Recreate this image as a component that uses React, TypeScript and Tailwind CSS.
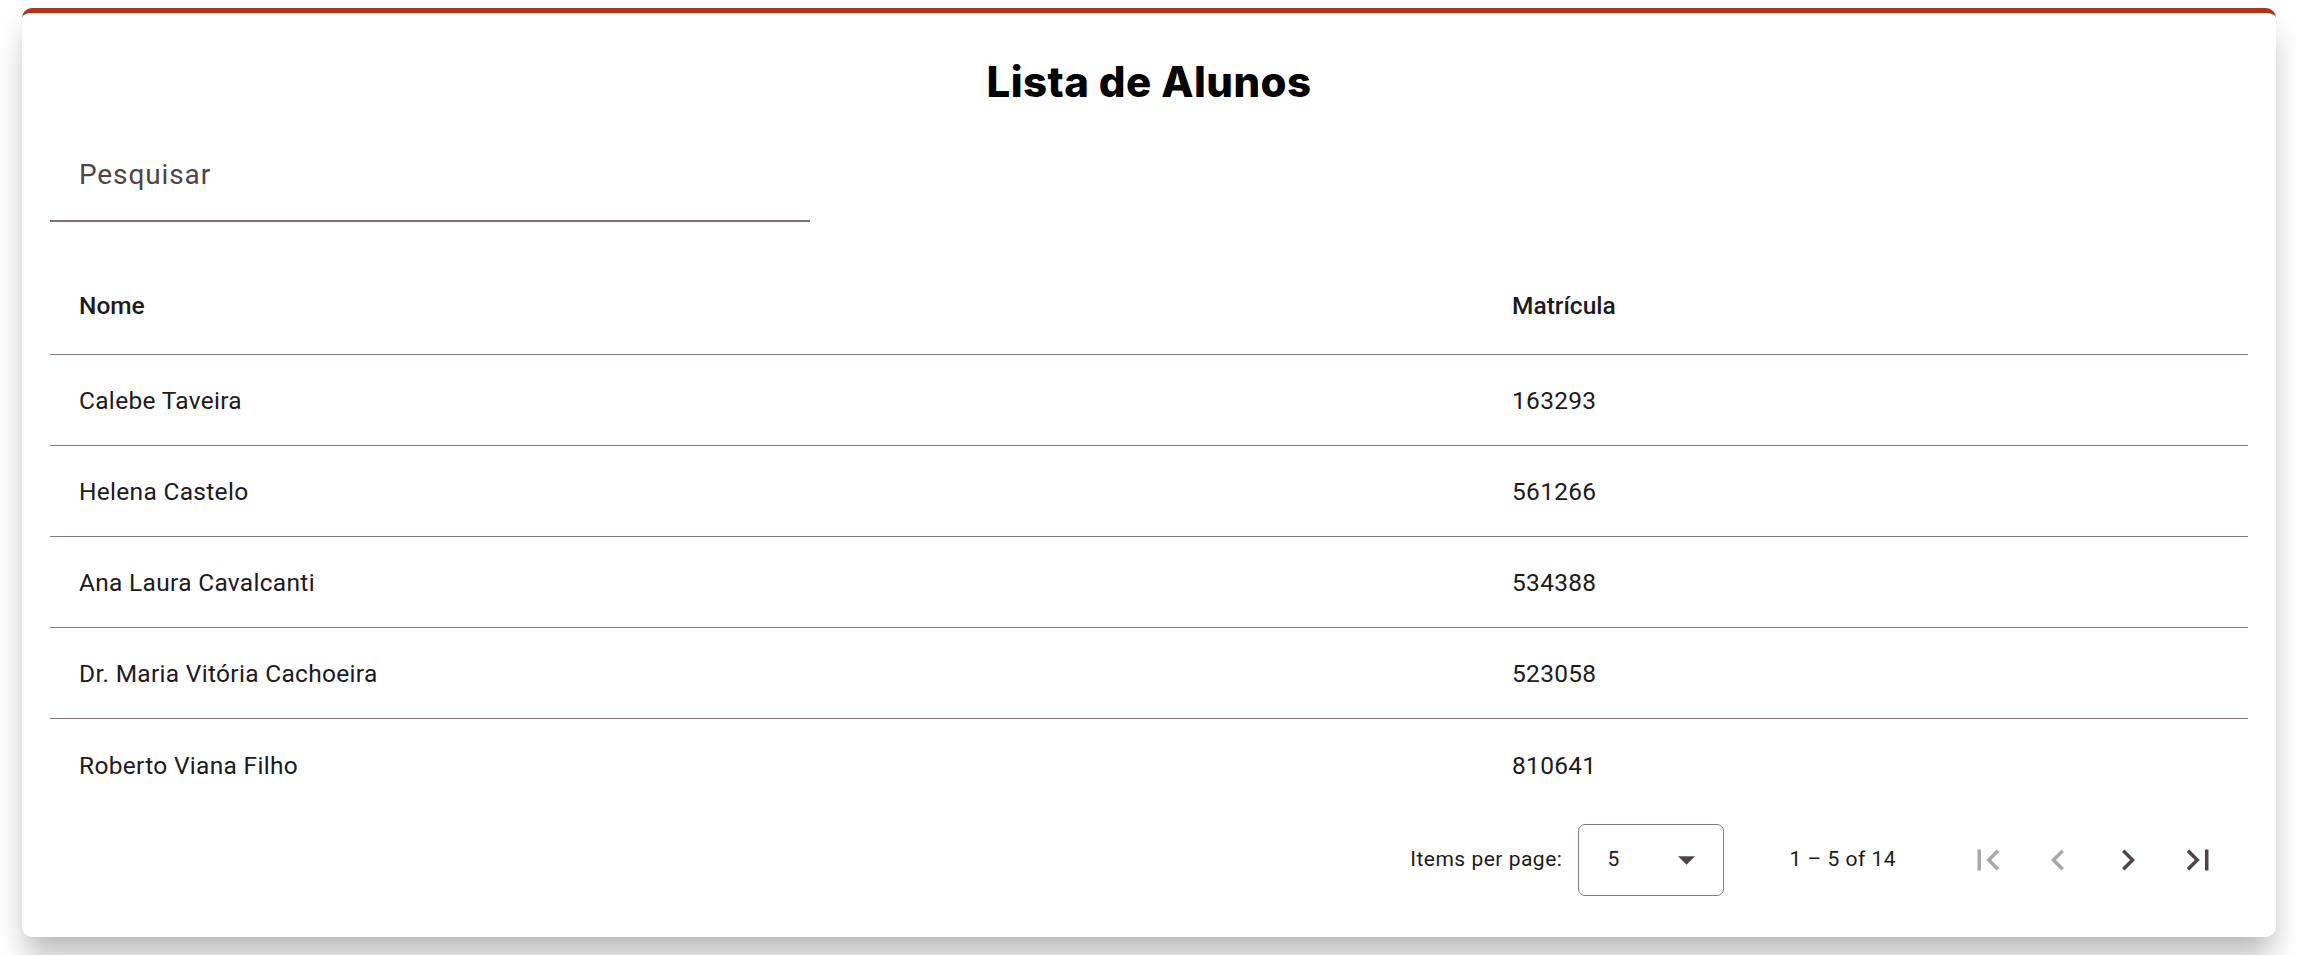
import React from "react";

const alunos = [
  { nome: "Calebe Taveira", matricula: "163293" },
  { nome: "Helena Castelo", matricula: "561266" },
  { nome: "Ana Laura Cavalcanti", matricula: "534388" },
  { nome: "Dr. Maria Vitória Cachoeira", matricula: "523058" },
  { nome: "Roberto Viana Filho", matricula: "810641" },
];

function PageIcon({ d, disabled }: { d: string; disabled?: boolean }) {
  return (
    <button className="flex h-[70px] w-[70px] items-center justify-center">
      <svg
        width={42}
        height={42}
        viewBox="0 0 24 24"
        fill={disabled ? "#aba6a7" : "#4f4446"}
      >
        <path d={d} />
      </svg>
    </button>
  );
}

function App() {
  return (
    <div className="min-h-screen bg-white px-[22px] pt-[8px] pr-[21px] font-['Roboto',sans-serif] text-[#201a1b]">
      <div className="h-[929px] rounded-[10px] border-t-[5px] border-[#ad351b] bg-white px-[28px] pt-[44px] shadow-[0_22px_30px_-4px_rgba(0,0,0,0.28)]">
        {/* Title */}
        <h1 className="text-center font-['Inter',sans-serif] text-[42px] leading-[50px] font-extrabold tracking-[0.01em] text-black">
          Lista de Alunos
        </h1>

        {/* Search */}
        <div className="mt-[17px] flex h-[98px] w-[760px] items-center border-b-2 border-[#7d7274] pt-[5px] pl-[29px]">
          <span className="text-[28px] tracking-[0.875px] text-[#524345]">
            Pesquisar
          </span>
        </div>

        {/* Table */}
        <div className="mt-[36px]">
          <div className="grid h-[97px] grid-cols-[1433px_1fr] items-center border-b border-[#857a7c] text-[24.5px] font-medium">
            <div className="pl-[29px]">Nome</div>
            <div className="pl-[29px]">Matrícula</div>
          </div>
          {alunos.map((a, i) => (
            <div
              key={a.matricula}
              className={`grid h-[91px] grid-cols-[1433px_1fr] items-center pt-[3px] text-[24.5px] tracking-[0.3px] ${
                i < alunos.length - 1 ? "border-b border-[#857a7c]" : ""
              }`}
            >
              <div className="pl-[29px]">{a.nome}</div>
              <div className="pl-[29px]">{a.matricula}</div>
            </div>
          ))}
        </div>

        {/* Paginator */}
        <div className="flex h-[98px] items-center justify-end pt-[2px] pr-[15px] text-[21px] tracking-[0.5px]">
          <span>Items per page:</span>
          <div className="ml-[16px] flex h-[72px] w-[146px] items-center justify-between rounded-[7px] border border-[#857a7c] pr-[28px] pl-[28px]">
            <span>5</span>
            <svg width={17} height={9} viewBox="0 0 10 5">
              <path d="M0 0L5 5L10 0z" fill="#4f4446" />
            </svg>
          </div>
          <span className="mr-[57px] ml-[65px]">1 – 5 of 14</span>
          <PageIcon
            disabled
            d="M18.41 16.59L13.82 12l4.59-4.59L17 6l-6 6 6 6zM6 6h2v12H6z"
          />
          <PageIcon
            disabled
            d="M15.41 7.41L14 6l-6 6 6 6 1.41-1.41L10.83 12z"
          />
          <PageIcon d="M10 6L8.59 7.41 13.17 12l-4.58 4.59L10 18l6-6z" />
          <PageIcon d="M5.59 7.41L10.18 12l-4.59 4.59L7 18l6-6-6-6zM16 6h2v12h-2z" />
        </div>
      </div>
    </div>
  );
}

export default App;
